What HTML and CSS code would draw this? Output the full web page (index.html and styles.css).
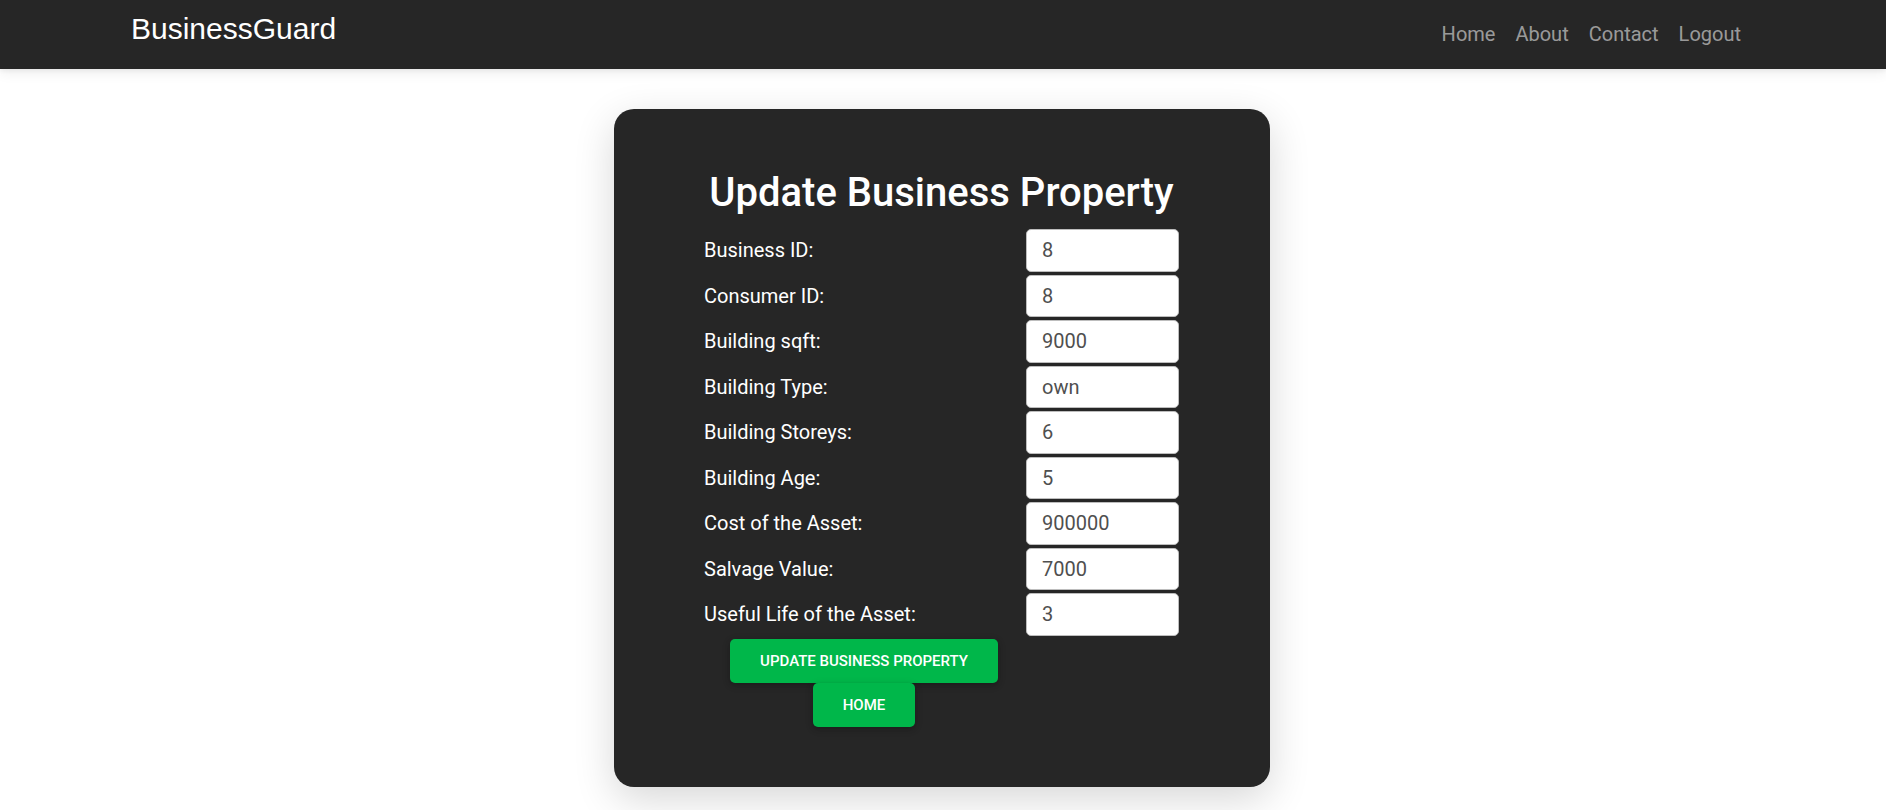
FILE: index.html
```html
<!DOCTYPE html>
<html lang="en">
<head>
<meta charset="utf-8">
<title>BusinessGuard</title>
<link rel="stylesheet" href="styles.css">
</head>
<body>
<header class="navbar">
  <a class="brand" href="#">BusinessGuard</a>
  <nav class="nav">
    <a class="nav-link" href="#">Home</a>
    <a class="nav-link" href="#">About</a>
    <a class="nav-link" href="#">Contact</a>
    <a class="nav-link" href="#">Logout</a>
  </nav>
</header>
<main class="page">
  <section class="card">
    <h1 class="title">Update Business Property</h1>
    <form class="form-grid">
      <label class="label">Business ID:</label>
      <input class="input" type="text" value="8">
      <label class="label">Consumer ID:</label>
      <input class="input" type="text" value="8">
      <label class="label">Building sqft:</label>
      <input class="input" type="text" value="9000">
      <label class="label">Building Type:</label>
      <input class="input" type="text" value="own">
      <label class="label">Building Storeys:</label>
      <input class="input" type="text" value="6">
      <label class="label">Building Age:</label>
      <input class="input" type="text" value="5">
      <label class="label">Cost of the Asset:</label>
      <input class="input" type="text" value="900000">
      <label class="label">Salvage Value:</label>
      <input class="input" type="text" value="7000">
      <label class="label">Useful Life of the Asset:</label>
      <input class="input" type="text" value="3">
      <div class="actions">
        <button class="btn" type="button">Update Business Property</button>
        <button class="btn" type="button">Home</button>
      </div>
    </form>
  </section>
</main>
</body>
</html>
```
FILE: styles.css
```css
* { box-sizing: border-box; }

html, body {
  margin: 0;
  padding: 0;
  background: #fff;
  font-family: Roboto, "Noto Sans", sans-serif;
}

.navbar {
  height: 69px;
  background: #262626;
  display: flex;
  align-items: center;
  padding: 0 135px 0 131px;
  box-shadow: 0 4px 12px 0 rgba(0,0,0,0.07), 0 2px 4px rgba(0,0,0,0.05);
  position: relative;
  z-index: 1;
}

.brand {
  align-self: flex-start;
  margin-top: 12px;
  font-family: "Liberation Sans", Arial, sans-serif;
  font-size: 30px;
  line-height: 34px;
  color: #fff;
  text-decoration: none;
}

.nav {
  margin-left: auto;
  display: flex;
  margin-top: -1px;
}

.nav-link {
  font-family: Roboto, sans-serif;
  font-size: 20px;
  line-height: 30px;
  padding: 0 10px;
  color: rgba(255,255,255,0.55);
  text-decoration: none;
}

.page {
  display: flex;
  justify-content: center;
  padding-top: 40px;
  padding-bottom: 40px;
  padding-right: 3px;
}

.card {
  width: 656px;
  background: #262626;
  border-radius: 20px;
  padding: 60px 0;
  box-shadow: 0 12px 40px rgba(0,0,0,0.16);
  display: flex;
  flex-direction: column;
  align-items: center;
}

.title {
  margin: 0 0 12px;
  font-size: 40px;
  line-height: 48px;
  font-weight: 500;
  color: #fff;
  text-align: center;
}

.form-grid {
  display: grid;
  grid-template-columns: 320px 153px;
  column-gap: 2px;
  row-gap: 3px;
  align-items: center;
}

.label {
  font-size: 20px;
  line-height: 30px;
  color: #fff;
}

.input {
  width: 153px;
  height: 42.5px;
  border: 1px solid #bdbdbd;
  border-radius: 5px;
  background: #fff;
  padding: 0 15px;
  font-family: Roboto, sans-serif;
  font-size: 20px;
  color: #4f4f4f;
  outline: none;
}

.actions {
  display: flex;
  flex-direction: column;
  align-items: center;
}

.btn {
  height: 44.4px;
  padding: 0 30px;
  border: none;
  border-radius: 5px;
  background: #00b74a;
  color: #fff;
  font-family: Roboto, sans-serif;
  font-size: 15px;
  font-weight: 500;
  text-transform: uppercase;
  line-height: 22px;
  box-shadow: 0 2px 5px 0 rgba(0,0,0,0.2), 0 2px 10px 0 rgba(0,0,0,0.1);
  cursor: pointer;
}
```
